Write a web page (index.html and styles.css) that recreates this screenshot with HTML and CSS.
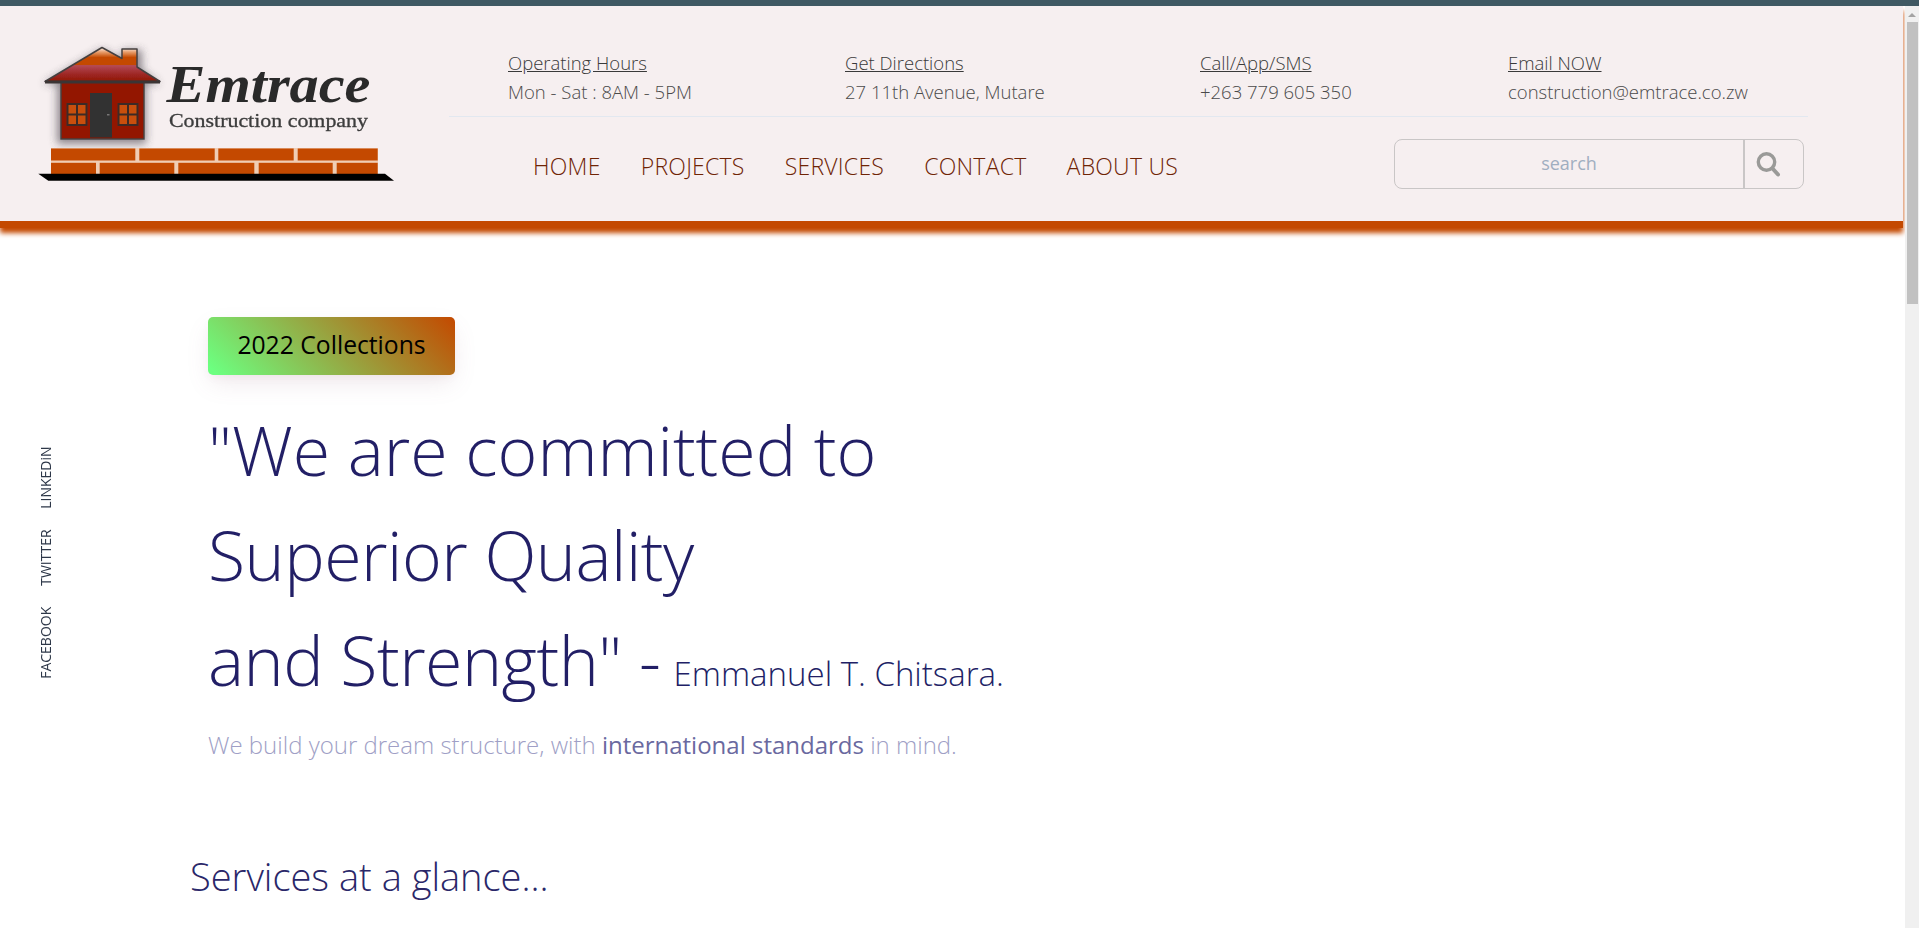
FILE: index.html
```html
<!DOCTYPE html>
<html lang="en">
<head>
<meta charset="utf-8">
<title>Emtrace Construction company</title>
<link rel="stylesheet" href="styles.css">
</head>
<body>
<div class="topbar"></div>
<div class="frame">
<div class="viewport">
  <header class="site-header">
    <a class="logo" href="#" aria-label="Emtrace Construction company">
      <svg class="logo-svg" width="370" height="150" viewBox="0 0 370 150">
        <defs>
          <linearGradient id="roof" x1="0" y1="7" x2="0" y2="42" gradientUnits="userSpaceOnUse">
            <stop offset="0" stop-color="#ffffff"/>
            <stop offset="0.14" stop-color="#e9a070"/>
            <stop offset="0.3" stop-color="#c44a00"/>
            <stop offset="0.5" stop-color="#c44a00"/>
            <stop offset="0.53" stop-color="#b44a55"/>
            <stop offset="0.75" stop-color="#a02a2a"/>
            <stop offset="1" stop-color="#8f1500"/>
          </linearGradient>
          <filter id="soft" x="-20%" y="-20%" width="140%" height="140%">
            <feGaussianBlur stdDeviation="0.4"/>
          </filter>
          <filter id="shade" x="-30%" y="-30%" width="160%" height="160%">
            <feGaussianBlur stdDeviation="4.500"/>
          </filter>
        </defs>
        <g filter="url(#soft)">
          <path d="M13 44 H130 L112 30 V10 H92 V20 L72 9 Z M27 44 H116 V104 H27 Z" fill="#45404a" opacity="0.6" filter="url(#shade)"/>
          <path d="M15 41.500 L72 7.500 L92 18.500 V9 H107 V27 L130 41.500 Z" fill="url(#roof)" stroke="#444040" stroke-width="1.500" stroke-linejoin="round"/>
          <rect x="31" y="42" width="83" height="57" fill="#931800" stroke="#444040" stroke-width="1.400"/>
          <rect x="15" y="40.500" width="115" height="3" fill="#3a3535"/>
          <rect x="60" y="53" width="22" height="44.500" fill="#333030"/>
          <rect x="77" y="74" width="2.500" height="1.500" fill="#777"/>
          <rect x="36.500" y="63" width="21" height="23" fill="#3e2c26"/>
          <rect x="87.500" y="63" width="21" height="23" fill="#3e2c26"/>
          <path d="M38.500 65 h7.500 v8.500 h-7.500 Z M48 65 h7.500 v8.500 h-7.500 Z M38.500 75.500 h7.500 v8.500 h-7.500 Z M48 75.500 h7.500 v8.500 h-7.500 Z M89.500 65 h7.500 v8.500 h-7.500 Z M99 65 h7.500 v8.500 h-7.500 Z M89.500 75.500 h7.500 v8.500 h-7.500 Z M99 75.500 h7.500 v8.500 h-7.500 Z" fill="#c9500a"/>
          <rect x="21" y="108" width="327" height="26" fill="#f0cdb4"/>
          <g fill="#c44a00">
            <rect x="21" y="108.500" width="84.300" height="12"/>
            <rect x="109.300" y="108.500" width="75.400" height="12"/>
            <rect x="188.300" y="108.500" width="75.400" height="12"/>
            <rect x="267.700" y="108.500" width="80" height="12"/>
            <rect x="21" y="122.800" width="45" height="11.500"/>
            <rect x="69.700" y="122.800" width="74.600" height="11.500"/>
            <rect x="148.300" y="122.800" width="76" height="11.500"/>
            <rect x="228.700" y="122.800" width="74" height="11.500"/>
            <rect x="306.700" y="122.800" width="41" height="11.500"/>
          </g>
          <path d="M8.300 133.700 H355 L364 140.700 H18.300 Z" fill="#050505"/>
          <text class="logo-name" x="136.500" y="61.500" textLength="204" lengthAdjust="spacingAndGlyphs">Emtrace</text>
          <text class="logo-sub" x="139" y="86.500" textLength="199" lengthAdjust="spacingAndGlyphs">Construction company</text>
        </g>
      </svg>
    </a>
    <div class="head-right">
      <div class="contacts">
        <div class="contact"><a class="contact-title" href="#">Operating Hours</a><span class="contact-value">Mon - Sat : 8AM - 5PM</span></div>
        <div class="contact"><a class="contact-title" href="#">Get Directions</a><span class="contact-value">27 11th Avenue, Mutare</span></div>
        <div class="contact"><a class="contact-title" href="#">Call/App/SMS</a><span class="contact-value">+263 779 605 350</span></div>
        <div class="contact"><a class="contact-title" href="#">Email NOW</a><span class="contact-value">construction@emtrace.co.zw</span></div>
      </div>
      <div class="nav-row">
        <nav class="nav">
          <a href="#">HOME</a>
          <a href="#">PROJECTS</a>
          <a href="#">SERVICES</a>
          <a href="#">CONTACT</a>
          <a href="#">ABOUT US</a>
        </nav>
        <form class="search">
          <input class="search-input" type="text" placeholder="search" aria-label="search">
          <button class="search-btn" type="button" aria-label="Search">
            <svg width="26" height="26" viewBox="0 0 26 26"><circle cx="11.500" cy="11" r="8.200" fill="none" stroke="#9a9a98" stroke-width="3.400"/><path d="M17.500 17.500 L23 23.500" stroke="#9a9a98" stroke-width="4" stroke-linecap="round"/></svg>
          </button>
        </form>
      </div>
    </div>
  </header>
  <main class="hero">
    <div class="badge">2022 Collections</div>
    <h1 class="headline">"We are committed to<br><span class="tight">Superior Quality<br>and Strength" - </span><span class="author">Emmanuel T. Chitsara.</span></h1>
    <p class="tagline">We build your dream structure, with <strong>international standards</strong> in mind.</p>
    <h2 class="services-title">Services at a glance...</h2>
  </main>
  <aside class="social">
    <a href="#">FACEBOOK</a>
    <a href="#">TWITTER</a>
    <a href="#">LINKEDiN</a>
  </aside>
</div>
<div class="scrollbar" aria-hidden="true">
  <div class="scroll-arrow"></div>
  <div class="scroll-thumb"></div>
</div>
</div>
</body>
</html>
```
FILE: styles.css
```css
* { box-sizing: border-box; }
html, body { height: 100%; margin: 0; overflow: hidden; }
body {
  display: flex;
  flex-direction: column;
  background: #fff;
  font-family: "Open Sans", "Noto Sans", sans-serif;
  font-weight: 300;
}
a { color: inherit; text-decoration: none; }

.topbar { flex: none; height: 6px; background: #3f5963; }
.frame { flex: 1; display: flex; min-height: 0; }
.viewport {
  flex: 1;
  position: relative;
  min-width: 0;
  overflow: hidden;
}
.scrollbar {
  flex: none;
  display: flex;
  flex-direction: column;
  align-items: flex-start;
  width: 14px;
  padding: 0 1px 0 2px;
  background: #f0f0f0;
}
.scroll-arrow {
  flex: none;
  width: 0;
  height: 0;
  margin: 7px 0 5px 1px;
  border: 4px solid transparent;
  border-top: 0;
  border-bottom-color: #a3a3a3;
}
.scroll-thumb { flex: none; width: 11px; height: 282px; background: #c1c1c1; }

.site-header {
  display: flex;
  margin-right: 2px;
  height: 222px;
  background: #f6eff0;
  border-bottom: 7px solid #c44900;
  box-shadow: 0 5px 5px #c44900;
}
.logo { flex: none; display: block; width: 449px; padding: 34px 0 0 30px; }
.logo-svg { display: block; }
.logo-name {
  font-family: "Liberation Serif", serif;
  font-style: italic;
  font-weight: 700;
  font-size: 52px;
  fill: #2a2a2a;
}
.logo-sub {
  font-family: "Liberation Serif", serif;
  font-weight: 400;
  font-size: 19px;
  fill: #3c3c3c;
  stroke: #3c3c3c;
  stroke-width: .3px;
}

.head-right { flex: none; width: 1359px; padding-top: 42px; }
.contacts {
  display: grid;
  grid-template-columns: 337px 355px 308px 1fr;
  padding: 0 0 10px 59px;
  border-bottom: 1px solid #e2e8f0;
  font-size: 18.500px;
  line-height: 29px;
  color: #4a4a4a;
}
.contact { display: flex; flex-direction: column; align-items: flex-start; }
.contact-title { text-decoration: underline; color: #3a3a3a; }
.nav-row {
  display: flex;
  justify-content: space-between;
  align-items: center;
  margin-top: 22px;
  padding: 0 4px 0 84px;
}
.nav { display: flex; gap: 40px; font-size: 23px; letter-spacing: .25px; color: #6f2405; padding-top: 3px; }
.search {
  display: flex;
  width: 410px;
  height: 50px;
  border: 1px solid #c9c6c6;
  border-radius: 8px;
}
.search-input {
  width: 350px;
  padding: 0 0 2px;
  border: 0;
  border-right: 2px solid #c9c6c6;
  background: transparent;
  text-align: center;
  font: 400 18px "Open Sans", sans-serif;
  color: #4a5568;
  outline: none;
}
.search-input::placeholder { color: #a0aec0; opacity: 1; }
.search-btn {
  display: flex;
  align-items: center;
  padding: 0 0 0 10px;
  flex: 1;
  border: 0;
  background: transparent;
}

.hero { padding: 89px 0 0 208px; }
.badge {
  display: flex;
  align-items: center;
  justify-content: center;
  width: 247px;
  height: 58px;
  padding-bottom: 3px;
  border-radius: 5px;
  background: linear-gradient(45deg, #6cff80 3%, #c44900 100%);
  box-shadow: 0 10px 25px -3px rgba(150, 100, 130, .15), 0 4px 8px -2px rgba(150, 100, 130, .07);
  font-size: 24.700px;
  font-weight: 400;
  color: #000;
}
.headline {
  margin: 22px 0 0;
  font-size: 68px;
  font-weight: 300;
  line-height: 105px;
  color: #221f66;
}
.tight { letter-spacing: -.5px; }
.author { margin-left: -4px; font-size: 33px; }
.tagline {
  margin: 2px 0 0;
  font-size: 24px;
  color: #a09fc6;
}
.tagline strong { font-weight: 500; color: #6a699f; }
.services-title {
  margin: 89px 0 0 -18px;
  font-size: 38px;
  font-weight: 300;
  color: #2a2769;
}

.social {
  position: absolute;
  left: 36px;
  top: 440px;
  display: flex;
  gap: 21px;
  writing-mode: vertical-rl;
  transform: rotate(180deg);
  font-size: 14px;
  font-weight: 400;
  color: #2d3748;
}
```
